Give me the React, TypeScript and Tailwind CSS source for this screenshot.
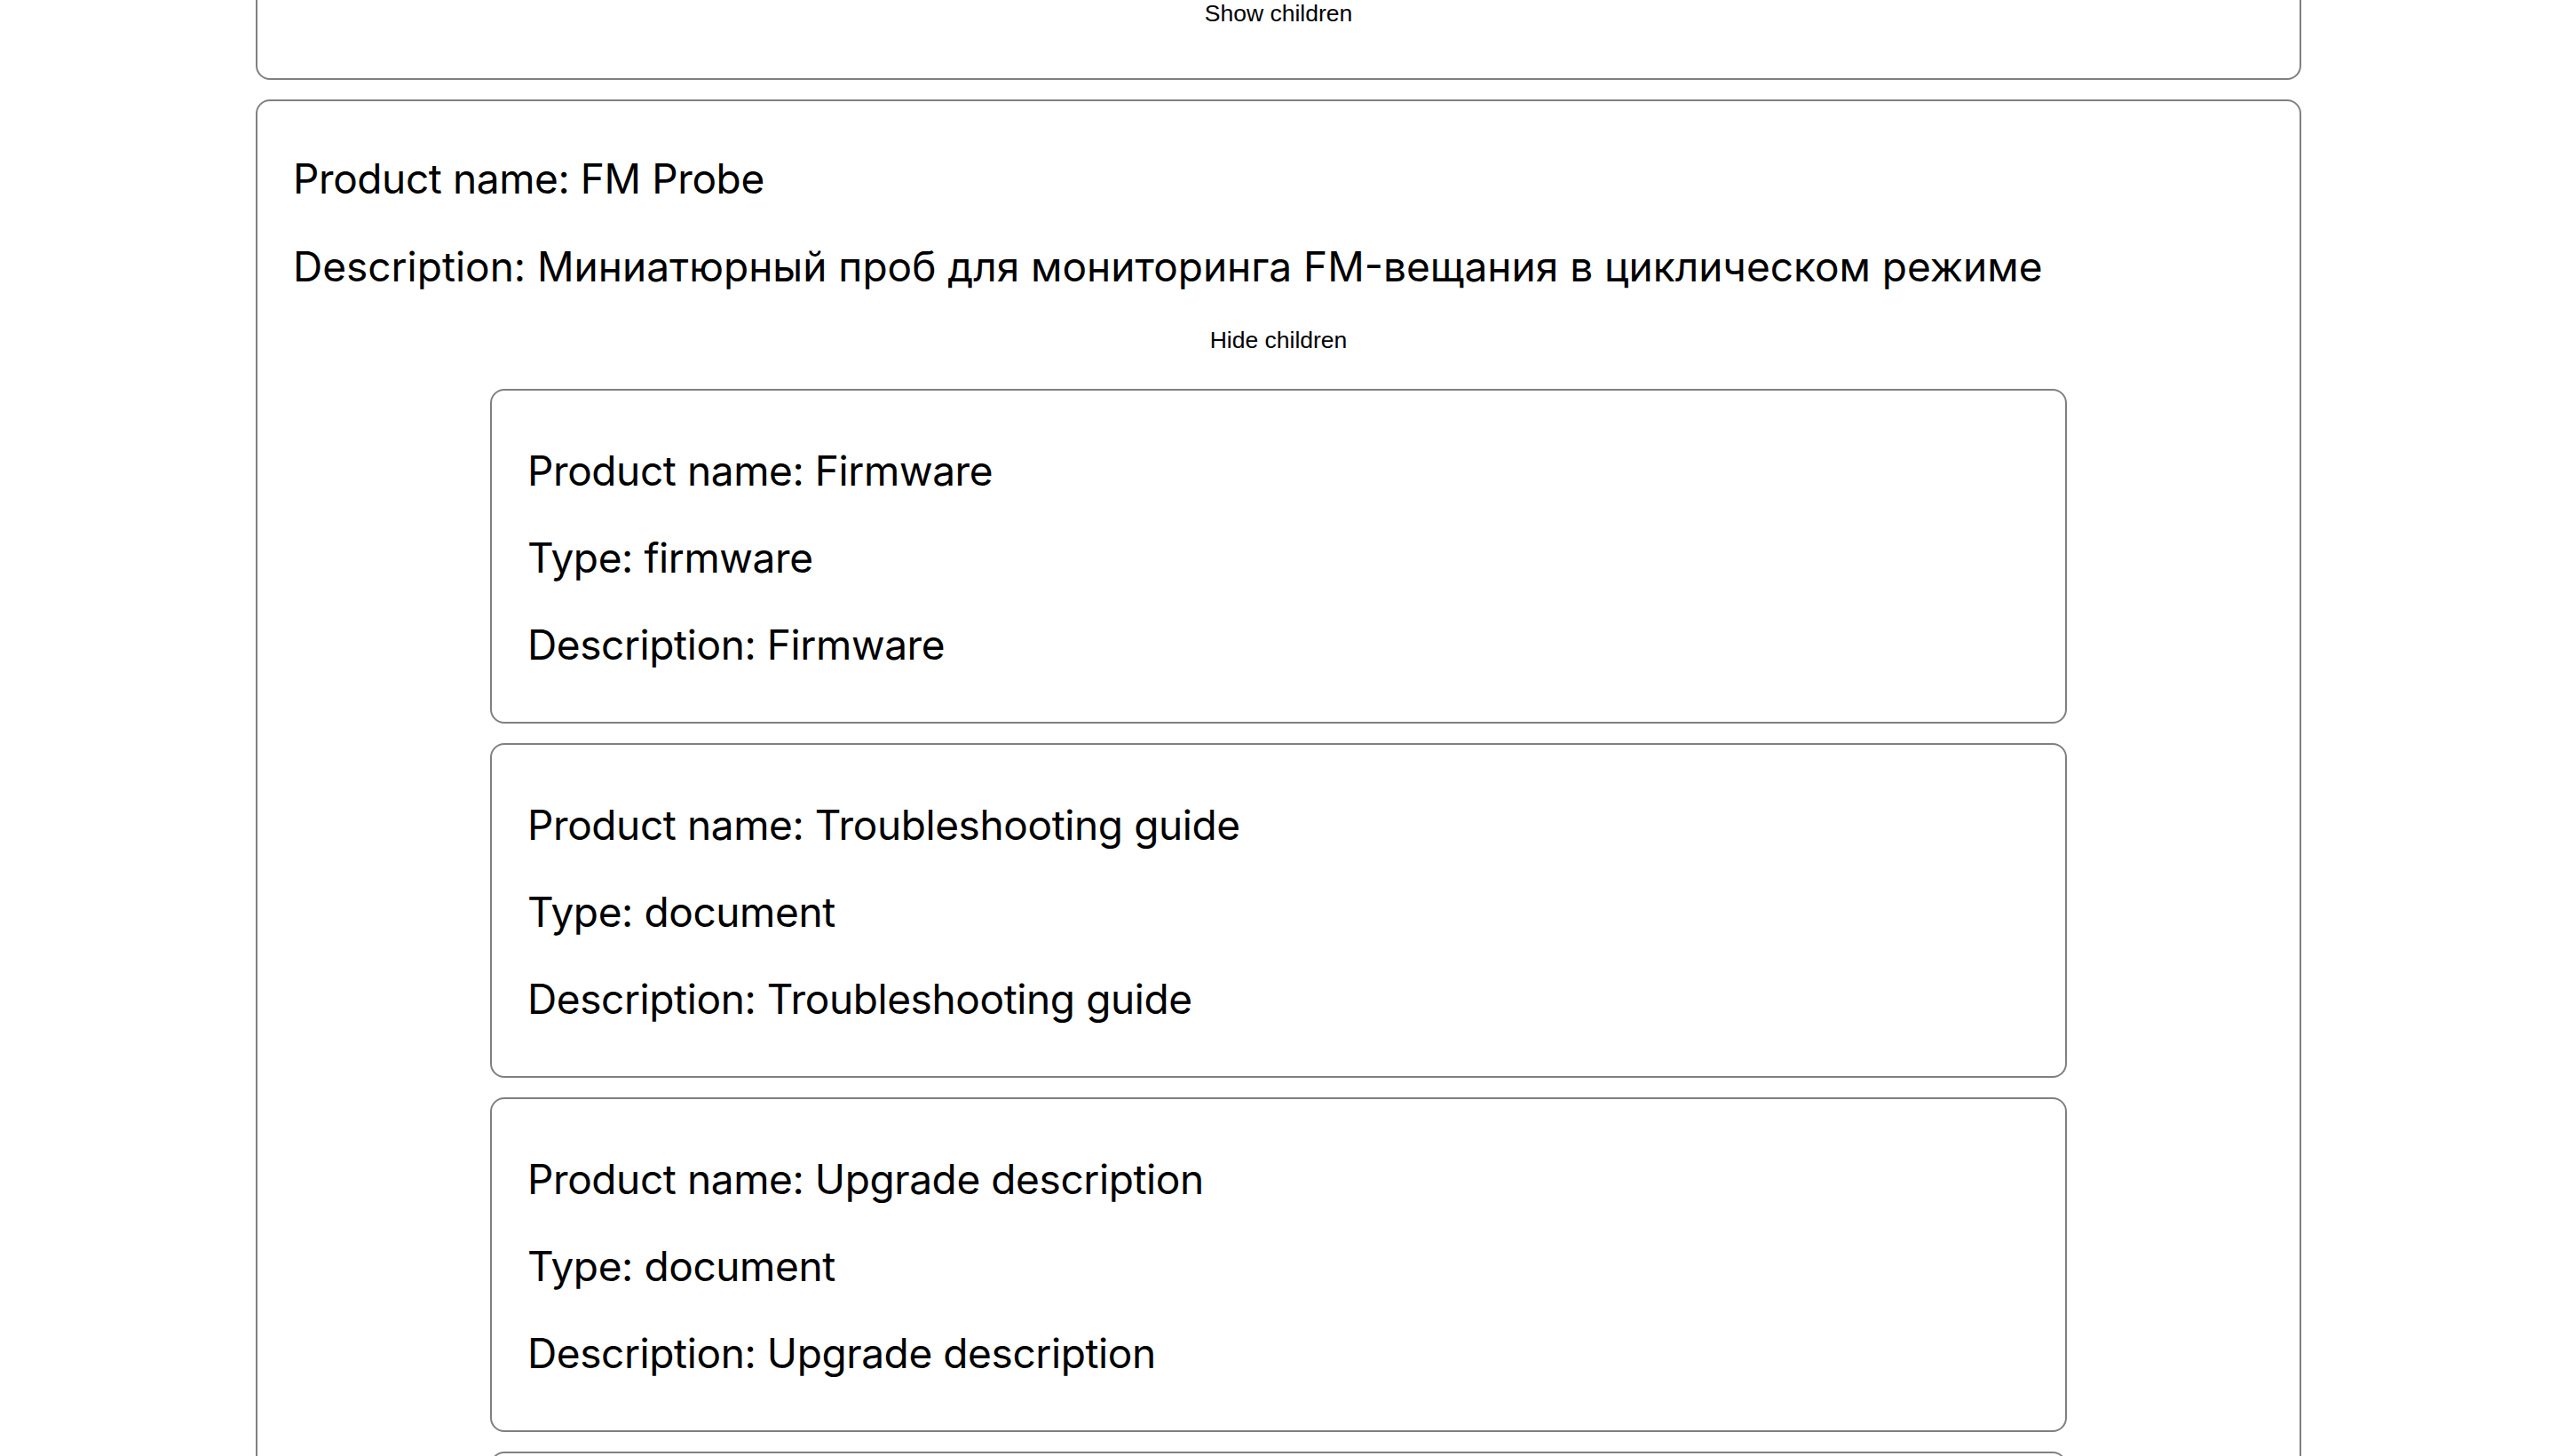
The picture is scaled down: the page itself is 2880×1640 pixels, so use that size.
import React, { useState } from 'react';

interface Product {
    name: string;
    type?: string;
    description: string;
    children?: Product[];
}

const probe: Product = {
    name: 'FM Probe',
    description: 'Миниатюрный проб для мониторинга FM-вещания в циклическом режиме',
    children: [
        { name: 'Firmware', type: 'firmware', description: 'Firmware' },
        { name: 'Troubleshooting guide', type: 'document', description: 'Troubleshooting guide' },
        { name: 'Upgrade description', type: 'document', description: 'Upgrade description' },
        { name: 'User manual', type: 'document', description: 'User manual' },
    ],
};

interface LineProps {
    children: React.ReactNode;
    cyrillic?: boolean;
}

const Line: React.FC<LineProps> = ({ children, cyrillic = false }) => (
    <p
        className={`text-[46px] leading-[56px] text-black whitespace-nowrap ${
            cyrillic ? '' : 'tracking-[-0.4px]'
        }`}
    >
        {children}
    </p>
);

const ToggleButton: React.FC<{ expanded: boolean; onClick: () => void }> = ({ expanded, onClick }) => (
    <div className="flex justify-center">
        <button
            onClick={onClick}
            className="text-[26.5px] leading-[30px] text-black font-['Liberation_Sans',Arial,sans-serif] cursor-pointer"
        >
            {expanded ? 'Hide children' : 'Show children'}
        </button>
    </div>
);

interface ProductCardProps {
    product: Product;
    open?: boolean;
}

const ProductCard: React.FC<ProductCardProps> = ({ product, open = false }) => {
    const [expanded, setExpanded] = useState(open);
    const hasChildren = product.children !== undefined;

    return (
        <div className="border-2 border-[#808080] rounded-[16px] px-[40px] pt-[59px] pb-[58px] bg-white">
            <div className="flex flex-col gap-[43px]">
                <Line>Product name: {product.name}</Line>
                <Line cyrillic>Description: {product.description}</Line>
            </div>

            {hasChildren && (
                <div className="mt-[40px]">
                    <ToggleButton expanded={expanded} onClick={() => setExpanded(!expanded)} />
                </div>
            )}

            {/* children list */}
            {hasChildren && expanded && (
                <div className="flex flex-col gap-[22px] mt-[40px]">
                    {product.children!.map((child) => (
                        <ChildCard key={child.name} product={child} />
                    ))}
                </div>
            )}
        </div>
    );
};

const ChildCard: React.FC<{ product: Product }> = ({ product }) => (
    <div className="w-4/5 mx-auto border-2 border-[#808080] rounded-[16px] px-[40px] pt-[62px] pb-[59px] bg-white">
        <div className="flex flex-col gap-[42px]">
            <Line>Product name: {product.name}</Line>
            <Line>Type: {product.type}</Line>
            <Line>Description: {product.description}</Line>
        </div>
    </div>
);

// collapsed card above, scrolled mostly out of view
const CollapsedCard: React.FC = () => {
    const [expanded, setExpanded] = useState(false);
    return (
        <div className="border-2 border-[#808080] rounded-[16px] px-[40px] pt-[257px] pb-[58px] bg-white">
            <ToggleButton expanded={expanded} onClick={() => setExpanded(!expanded)} />
        </div>
    );
};

export default function App() {
    return (
        <div className="min-h-screen bg-white overflow-hidden font-['Inter','Noto_Sans',sans-serif]">
            <div className="w-4/5 mx-auto flex flex-col gap-[22px] -mt-[259px]">
                <CollapsedCard />
                <ProductCard product={probe} open />
            </div>
        </div>
    );
}
